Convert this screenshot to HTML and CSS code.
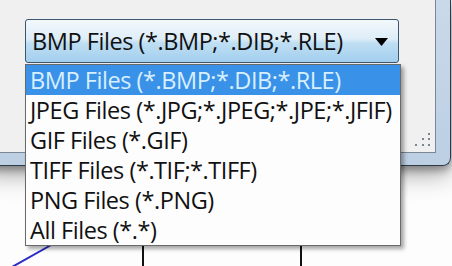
FILE: index.html
```html
<!DOCTYPE html>
<html lang="en">
<head>
    <meta charset="UTF-8">
    <meta name="viewport" content="width=device-width, initial-scale=1.0">
    <title>Save As Type</title>
    <link rel="stylesheet" href="styles.css">
</head>
<body>
    <div class="window">
        <div class="panel">
            <div class="combo">
                <span class="combo-text">BMP Files (*.BMP;*.DIB;*.RLE)</span>
                <svg class="combo-arrow" width="13" height="8" viewBox="0 0 13 8">
                    <path d="M0 0 H13 L6.5 8 Z" fill="#000"/>
                </svg>
            </div>
            <svg class="grip" width="16" height="14" viewBox="0 0 16 14">
                <g fill="#7d8690">
                    <rect x="13" y="0" width="2" height="2"/>
                    <rect x="7" y="5" width="2" height="2"/>
                    <rect x="13" y="5" width="2" height="2"/>
                    <rect x="0" y="11" width="2" height="2"/>
                    <rect x="7" y="11" width="2" height="2"/>
                    <rect x="13" y="11" width="2" height="2"/>
                </g>
            </svg>
        </div>
    </div>
    <svg class="canvas" width="452" height="100" viewBox="0 0 452 100">
        <line x1="12" y1="101" x2="60" y2="74" stroke="#2b2bc8" stroke-width="2"/>
        <line x1="143" y1="80" x2="143" y2="100" stroke="#111" stroke-width="2"/>
        <line x1="301" y1="80" x2="301" y2="100" stroke="#111" stroke-width="2"/>
    </svg>
    <ul class="list">
        <li class="selected">BMP Files (*.BMP;*.DIB;*.RLE)</li>
        <li>JPEG Files (*.JPG;*.JPEG;*.JPE;*.JFIF)</li>
        <li>GIF Files (*.GIF)</li>
        <li>TIFF Files (*.TIF;*.TIFF)</li>
        <li>PNG Files (*.PNG)</li>
        <li>All Files (*.*)</li>
    </ul>
</body>
</html>
```

FILE: styles.css
```css
body {
    margin: 0;
    width: 452px;
    height: 266px;
    overflow: hidden;
    position: relative;
    background: #fdfdfd;
    font-family: "Open Sans", "Noto Sans", sans-serif;
    font-size: 23.5px;
    letter-spacing: -0.45px;
    color: #111;
}

.window {
    width: 456px;
    height: 153px;
    margin-left: -20px;
    padding: 0 14px 12px 0;
    background: linear-gradient(#c9d9ea, #bccfe3);
    border-right: 1px solid #2c3a48;
    border-bottom: 1px solid #2c3a48;
    border-bottom-right-radius: 8px;
    box-shadow: 0 4px 8px rgba(0, 0, 0, 0.35), 0 10px 24px rgba(0, 0, 0, 0.3);
}

.panel {
    box-sizing: border-box;
    height: 153px;
    padding: 19px 0 0 45px;
    background: #f0f0f0;
    border-right: 1px solid #7a8694;
    border-bottom: 1px solid #7a8694;
    display: flex;
    flex-direction: column;
}

.combo {
    box-sizing: border-box;
    width: 374px;
    height: 44px;
    padding: 0 10px 0 6px;
    border: 1px solid #3d5670;
    border-radius: 3px;
    background: linear-gradient(#f3f8fc, #deedf8 45%, #bfdef3 55%, #a2cfee);
    display: flex;
    align-items: center;
    justify-content: space-between;
}

.combo-arrow {
    margin-top: 1px;
}

.grip {
    margin: auto 4px 5px 0;
    align-self: flex-end;
}

.canvas {
    display: block;
}

.list {
    position: absolute;
    left: 25px;
    top: 64px;
    width: 374px;
    margin: 0;
    padding: 0;
    list-style: none;
    background: #fdfdfd;
    border: 1px solid #6a6a6a;
    box-shadow: 3px 3px 4px rgba(0, 0, 0, 0.35);
}

.list li {
    height: 30px;
    line-height: 30px;
    padding-left: 4px;
    white-space: nowrap;
}

.list .selected {
    background: #3a92e8;
    color: #d8efff;
}
```
